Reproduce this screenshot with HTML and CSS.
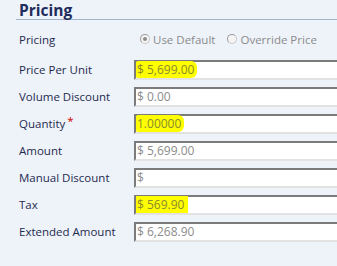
FILE: index.html
```html
<!DOCTYPE html>
<html>
<head>
    <title>Pricing</title>
    <meta name="viewport" content="width=device-width, initial-scale=1">
    <link rel="stylesheet" href="styles.css">
</head>
<body>
    <div class="section">
        <h2 class="section-title">Pricing</h2>

        <div class="row first">
            <div class="label">Pricing</div>
            <div class="field radios">
                <label class="radio-option"><span class="radio checked"></span>Use Default</label>
                <label class="radio-option"><span class="radio"></span>Override Price</label>
            </div>
        </div>

        <div class="row">
            <div class="label">Price Per Unit</div>
            <div class="field"><div class="box"><span class="marker">$ 5,699.00</span></div></div>
        </div>

        <div class="row">
            <div class="label">Volume Discount</div>
            <div class="field"><div class="box"><span class="value">$ 0.00</span></div></div>
        </div>

        <div class="row">
            <div class="label">Quantity<span class="required">*</span></div>
            <div class="field"><div class="box"><span class="marker">1.00000</span></div></div>
        </div>

        <div class="row">
            <div class="label">Amount</div>
            <div class="field"><div class="box"><span class="value">$ 5,699.00</span></div></div>
        </div>

        <div class="row">
            <div class="label">Manual Discount</div>
            <div class="field"><div class="box"><span class="value">$</span></div></div>
        </div>

        <div class="row">
            <div class="label">Tax</div>
            <div class="field"><div class="box"><span class="hilite">$ 569.90</span></div></div>
        </div>

        <div class="row">
            <div class="label">Extended Amount</div>
            <div class="field"><div class="box"><span class="value">$ 6,268.90</span></div></div>
        </div>
    </div>
</body>
</html>
```

FILE: styles.css
```css
body {
    margin: 0;
    background-color: #eef3fa;
    font-family: "Open Sans", "Noto Sans", sans-serif;
    overflow: hidden;
}

.section {
    padding-left: 16px;
}

.section-title {
    margin: 0;
    padding: 1px 0 0 3px;
    height: 18px;
    font-size: 15.5px;
    line-height: 18px;
    font-weight: bold;
    color: #1f2c5c;
    border-bottom: 1px solid #9fb3cd;
}

.row {
    display: grid;
    grid-template-columns: 118px 1fr;
    align-items: center;
    height: 27px;
}

.row.first {
    height: 34px;
    padding-top: 2px;
}

.label {
    padding-left: 3px;
    font-size: 11.5px;
    color: #1e2a4e;
}

.required {
    color: #d40000;
    margin-left: 2px;
    position: relative;
    top: -3px;
}

.radios {
    display: flex;
    gap: 12px;
    padding-left: 6px;
    font-size: 11.5px;
    color: #8a8a8a;
}

.radio-option {
    display: flex;
    align-items: center;
    gap: 3px;
    white-space: nowrap;
}

.radio {
    width: 10px;
    height: 10px;
    border-radius: 50%;
    background: #f4f4f4;
    border: 1px solid #c8c8c8;
    border-top-color: #9a9a9a;
    border-left-color: #9a9a9a;
    box-sizing: border-box;
    position: relative;
}

.radio.checked::after {
    content: "";
    position: absolute;
    left: 2px;
    top: 2px;
    width: 4px;
    height: 4px;
    border-radius: 50%;
    background: #8c8c8c;
}

.field {
    overflow: hidden;
}

.box {
    width: 260px;
    height: 20px;
    box-sizing: border-box;
    background: #ffffff;
    border-top: 2px solid #7b7b7b;
    border-left: 2px solid #7b7b7b;
    border-bottom: 2px solid #e2e2e2;
    font-size: 12px;
    line-height: 15px;
    color: #8c8c8c;
    display: flex;
    align-items: center;
}

.value {
    padding-left: 1px;
}

.marker {
    position: relative;
    padding: 1px 3px 1px 1px;
    color: #8a8a2e;
    background: #ffff00;
    border-radius: 2px 6px 6px 2px;
}

.hilite {
    padding: 1px 4px 1px 1px;
    color: #8a8a2e;
    background: #ffff00;
}
```
